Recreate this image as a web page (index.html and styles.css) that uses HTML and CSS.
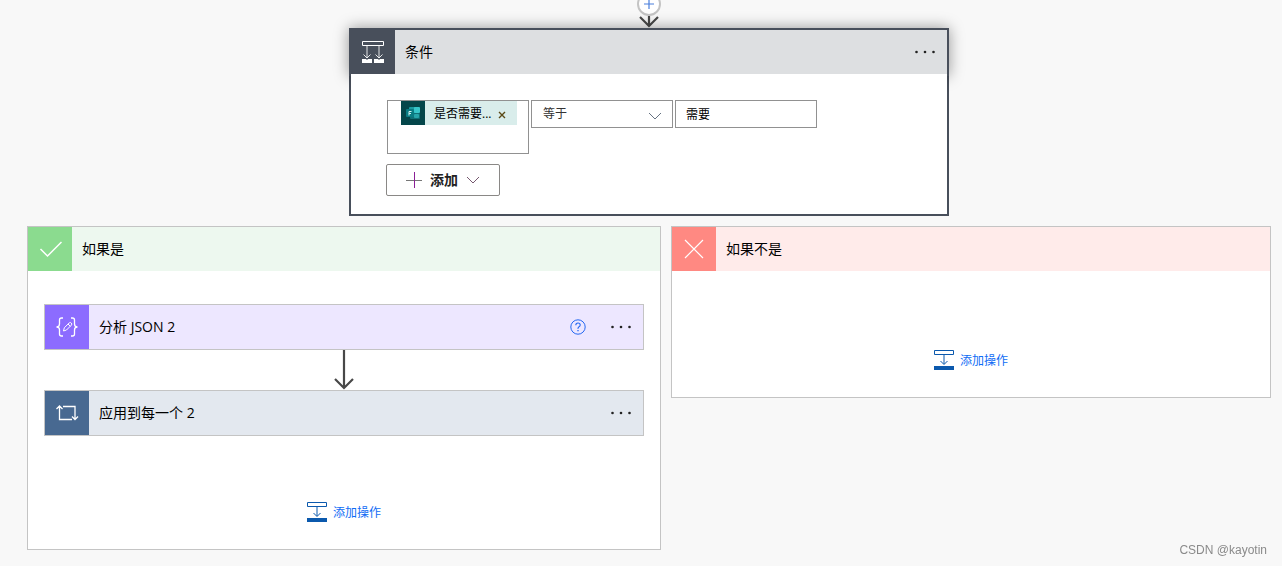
FILE: index.html
```html
<!DOCTYPE html>
<html lang="zh-CN">
<head>
<meta charset="utf-8">
<title>条件</title>
<link rel="stylesheet" href="styles.css">
</head>
<body>
<main class="flow">
  <div class="connector">
    <button class="insert" type="button" aria-label="插入步骤">
      <svg width="12" height="12" viewBox="0 0 12 12"><path d="M6 1v10M1 6h10" stroke="#4a7fdc" stroke-width="1.200"/></svg>
    </button>
    <svg class="arrow" width="24" height="12" viewBox="0 0 24 12"><path d="M12 0v10M3 1l9 9 9-9" fill="none" stroke="#484848" stroke-width="2.200"/></svg>
  </div>

  <section class="condition">
    <header class="bar condition-bar">
      <span class="tile tile-dark">
        <svg width="24" height="24" viewBox="0 0 24 24" fill="none" stroke="#fff"><path d="M1.500 1.500h21v4h-21z"/><path d="M6 6v12M18 6v12M2.500 14.500l3.500 3.500 3.500-3.500M14.500 14.500l3.500 3.500 3.500-3.500" stroke-opacity=".85"/><path d="M1 19h4l1 1 1-1h4v4H1zM13 19h4l1 1 1-1h4v4H13z" fill="#fff" stroke="none"/></svg>
      </span>
      <h2 class="title">条件</h2>
      <button class="more" type="button" aria-label="更多"><svg width="22" height="4" viewBox="0 0 22 4" fill="#222"><circle cx="2.500" cy="2" r="1.300"/><circle cx="11" cy="2" r="1.300"/><circle cx="19.500" cy="2" r="1.300"/></svg></button>
    </header>
    <div class="condition-body">
      <div class="row">
        <div class="token-box">
          <span class="token">
            <svg class="token-icon" width="24" height="24" viewBox="0 0 24 24"><path fill="#04464a" d="M0 0h24v24H0z"/><rect x="8" y="6" width="8" height="6" rx="1" fill="#1b9aa0"/><rect x="13" y="6" width="6" height="6" rx="1" fill="#36c5c9"/><rect x="9" y="12" width="10" height="6" rx="1" fill="#0e7077"/><rect x="13" y="13" width="5" height="4" rx="1" fill="#27a5aa"/><rect x="5" y="8" width="8" height="8" rx="1" fill="#087c83"/><path d="M8 14.500v-4h2.500M8 12.500h2" fill="none" stroke="#d5f5f3"/></svg>
            <span class="token-text">是否需要...</span>
            <button class="remove" type="button" aria-label="删除"><svg width="8" height="8" viewBox="0 0 8 8"><path d="M1 1l6 6M7 1L1 7" stroke="#5b4a16" stroke-width="1.400"/></svg></button>
          </span>
        </div>
        <div class="select-wrap">
          <select class="field" aria-label="运算符"><option>等于</option></select>
          <svg class="chevron" width="14" height="8" viewBox="0 0 14 8"><path d="M1 1l6 6 6-6" fill="none" stroke="#667382"/></svg>
        </div>
        <input class="field" type="text" value="需要" aria-label="值">
      </div>
      <button class="add" type="button">
        <svg width="16" height="16" viewBox="0 0 16 16"><path d="M0 8.500h16" stroke="#777"/><path d="M8.500 0v16" stroke="#8a1f96"/></svg>
        <span>添加</span>
        <svg width="14" height="8" viewBox="0 0 14 8"><path d="M1 1l6 6 6-6" fill="none" stroke="#76586f"/></svg>
      </button>
    </div>
  </section>

  <div class="branches">
    <section class="branch branch-yes">
      <header class="bar bar-yes">
        <span class="tile tile-green"><svg width="24" height="24" viewBox="0 0 24 24"><path d="M2.500 12l7 7L23.500 5" fill="none" stroke="#fff" stroke-width="1.500"/></svg></span>
        <h2 class="title">如果是</h2>
      </header>
      <div class="steps">
        <article class="bar step step-json">
          <span class="tile tile-purple"><svg width="24" height="24" viewBox="0 0 24 24" fill="none" stroke="#fff" stroke-width="1.300"><path d="M8 3H6.500Q4.500 3 4.500 5v4q0 3-3 3 3 0 3 3v4q0 2 2 2H8M16 3h1.500q2 0 2 2v4q0 3 3 3-3 0-3 3v4q0 2-2 2H16"/><path d="M8.500 16l.8-3.200 5-5q1-.8 2 .2t.2 2l-5 5zM13 9l2.400 2.400" stroke-width="1"/></svg></span>
          <h3 class="title">分析 JSON 2</h3>
          <button class="help" type="button" aria-label="帮助"><svg width="16" height="16" viewBox="0 0 16 16" fill="none" stroke="#2468f2"><circle cx="8" cy="8" r="7.200"/><path d="M5.800 6.300q0-2.300 2.200-2.300t2.200 2q0 1-1.200 1.800T8 9.800" stroke-width="1.100"/><path d="M8 11v1.300" stroke-width="1.300"/></svg></button>
          <button class="more" type="button" aria-label="更多"><svg width="22" height="4" viewBox="0 0 22 4" fill="#222"><circle cx="2.500" cy="2" r="1.300"/><circle cx="11" cy="2" r="1.300"/><circle cx="19.500" cy="2" r="1.300"/></svg></button>
        </article>
        <svg class="arrow" width="24" height="40" viewBox="0 0 24 40"><path d="M12 0v38M3 29l9 9 9-9" fill="none" stroke="#484848" stroke-width="2.200"/></svg>
        <article class="bar step step-each">
          <span class="tile tile-blue"><svg width="24" height="24" viewBox="0 0 24 24" fill="none" stroke="#fff" stroke-width="1.300"><path d="M4.500 5v13.500H17M1.500 8l3-3 3 3M8 5.500h12V18M17 15.500l3 3 3-3"/></svg></span>
          <h3 class="title">应用到每一个 2</h3>
          <button class="more" type="button" aria-label="更多"><svg width="22" height="4" viewBox="0 0 22 4" fill="#222"><circle cx="2.500" cy="2" r="1.300"/><circle cx="11" cy="2" r="1.300"/><circle cx="19.500" cy="2" r="1.300"/></svg></button>
        </article>
      </div>
      <a class="add-action" href="#">
        <svg width="20" height="20" viewBox="0 0 20 20" fill="none" stroke="#0b59ad"><path d="M.5.500h19v4H.5z"/><path d="M10 5v9M6.500 11l3.500 3.500 3.500-3.500"/><path d="M0 16h20v4H0z" fill="#0b59ad" stroke="none"/></svg>
        <span>添加操作</span>
      </a>
    </section>

    <section class="branch branch-no">
      <header class="bar bar-no">
        <span class="tile tile-red"><svg width="24" height="24" viewBox="0 0 24 24"><path d="M3 3l18 18M21 3L3 21" stroke="#fff" stroke-width="1.200"/></svg></span>
        <h2 class="title">如果不是</h2>
      </header>
      <a class="add-action add-action-empty" href="#">
        <svg width="20" height="20" viewBox="0 0 20 20" fill="none" stroke="#0b59ad"><path d="M.5.500h19v4H.5z"/><path d="M10 5v9M6.500 11l3.500 3.500 3.500-3.500"/><path d="M0 16h20v4H0z" fill="#0b59ad" stroke="none"/></svg>
        <span>添加操作</span>
      </a>
    </section>
  </div>
</main>
<div class="watermark">CSDN @kayotin</div>
</body>
</html>
```
FILE: styles.css
```css
* { box-sizing: border-box; }

body {
  margin: 0;
  background: #f8f8f8;
  color: #000;
  font-family: "Open Sans", "Noto Sans CJK SC", sans-serif;
  font-size: 14px;
  line-height: 20px;
}

svg { display: block; flex: none; }

button, input, select { font: inherit; color: inherit; }

button {
  display: flex;
  align-items: center;
  justify-content: center;
  padding: 0;
  border: 0;
  background: none;
}

.flow {
  display: flex;
  flex-direction: column;
  align-items: center;
  padding: 0 11px 16px 27px;
  overflow: hidden;
}

.connector {
  display: flex;
  flex-direction: column;
  align-items: center;
  margin-top: -8px;
}

.insert {
  width: 24px;
  height: 24px;
  border: 2px solid #c4c4c4;
  border-radius: 50%;
  background: #fff;
}

.condition {
  width: 100%;
  max-width: 600px;
  border: 2px solid #484f5b;
  background: #484f5b;
}

.bar { display: flex; align-items: center; }

.condition-bar {
  background: #dddfe1;
  box-shadow: 0 0 0 2px #484f5b, 0 0 14px 2px rgba(0, 0, 0, 0.4);
}

.tile {
  display: flex;
  align-items: center;
  justify-content: center;
  flex: none;
  width: 44px;
  height: 44px;
}

.tile-dark { background: #484f5b; }
.tile-green { background: #8bdb8f; }
.tile-red { background: #ff8982; }
.tile-purple { background: #8c6cff; }
.tile-blue { background: #486991; }

.title {
  flex: 1;
  margin: 0;
  padding-left: 10px;
  font-size: 14px;
  font-weight: 400;
}

.more { width: 22px; height: 24px; margin-right: 11px; }
.help { width: 24px; height: 24px; margin-right: 20px; }

.condition-body {
  position: relative;
  padding: 26px 35px 18px;
  background: #fff;
}

.row {
  display: flex;
  align-items: flex-start;
  gap: 2px;
  padding-left: 1px;
  font-size: 12px;
}

.token-box {
  width: 142px;
  height: 54px;
  padding-left: 13px;
  border: 1px solid #919191;
}

.token {
  display: flex;
  align-items: center;
  width: 116px;
  height: 24px;
  background: #d9edeb;
}

.token-text { padding: 2px 0 0 9px; }
.remove { width: 8px; height: 8px; margin: 4px 11px 0 auto; }

.select-wrap { position: relative; }

.field {
  display: block;
  width: 142px;
  height: 28px;
  margin: 0;
  padding: 0 10px;
  border: 1px solid #919191;
  border-radius: 0;
  background: #fff;
  appearance: none;
}

select.field { padding-left: 11px; color: #333; }

.chevron {
  position: absolute;
  top: 12px;
  right: 11px;
  pointer-events: none;
}

.add {
  gap: 8px;
  width: 114px;
  height: 32px;
  margin-top: 10px;
  border: 1px solid #8a8886;
  border-radius: 2px;
  color: #222;
  font-weight: 600;
}

.branches {
  display: flex;
  align-items: flex-start;
  gap: 10px;
  width: 100%;
  margin-top: 10px;
}

.branch {
  display: flex;
  flex-direction: column;
  border: 1px solid #c4c4c4;
  background: #fff;
}

.branch-yes { flex: 634 1 0; }
.branch-no { flex: 600 1 0; }
.bar-yes { background: #edf8ef; }
.bar-no { background: #ffebea; }

.steps {
  display: flex;
  flex-direction: column;
  align-items: center;
  padding: 33px 16px 0;
}

.step { width: 100%; border: 1px solid #c4c4c4; }
.step-json { background: #ede7ff; }
.step-each { background: #e3e8ef; }

.add-action {
  display: flex;
  align-items: center;
  align-self: center;
  gap: 6px;
  margin: 65px 0 27px;
  color: #0f6cf5;
  font-size: 12px;
  line-height: 19px;
  text-decoration: none;
}

.add-action span { padding-top: 2px; }

.add-action-empty { margin-top: 78px; }

.watermark {
  position: fixed;
  right: 15px;
  bottom: 6px;
  color: #8a8a8a;
  font-family: "Liberation Sans", sans-serif;
  font-size: 12px;
}
```
